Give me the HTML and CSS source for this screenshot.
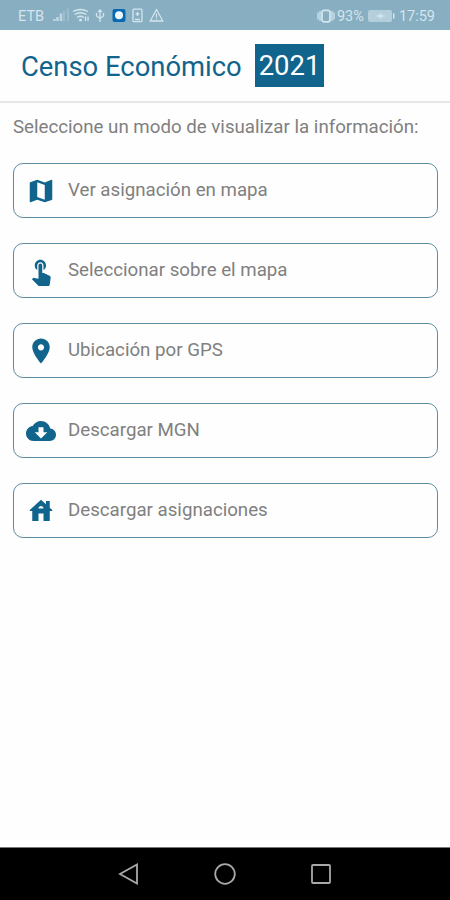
FILE: index.html
```html
<!DOCTYPE html>
<html lang="es">
<head>
    <meta charset="UTF-8">
    <meta name="viewport" content="width=device-width, initial-scale=1.0">
    <title>Censo Económico 2021</title>
    <link rel="stylesheet" href="styles.css">
</head>
<body>
    <div class="status-bar">
        <span class="carrier">ETB</span>
        <svg class="status-icons" width="114" height="18" viewBox="0 0 114 18">
            <!-- signal -->
            <path class="soft" d="M3.500 14v-2M6.500 14v-4M10 14V6.500"/>
            <path class="faint" d="M13 14V4M17 14V1.500"/>
            <!-- wifi -->
            <path class="line" d="M22 4.500q7.500-4 15 0M23.500 7.500q6-3.500 12 0M26 10.500q3.500-2.500 7 0"/>
            <circle class="fill" cx="29.500" cy="13" r="1.500"/>
            <path class="line" d="M34.500 9.500v4.500M37 9.500v4.500"/>
            <!-- usb -->
            <path class="line" d="M49 15V3M47 5l2-2 2 2M45.500 6v3l3.500 2.500L52.500 9V6"/>
            <!-- app -->
            <rect class="app-badge" x="61.500" y="2" width="13" height="13" rx="2"/>
            <circle class="app-dot" cx="68" cy="8.300" r="4"/>
            <!-- battery saver -->
            <rect class="line" x="82" y="2.200" width="9" height="12.500" rx="1"/>
            <path class="line" d="M86.500 5v4M84.700 7h3.600M84 12.500h5"/>
            <!-- warning -->
            <path class="line" d="M105.500 2.500l-6.300 11.500h12.600zM105.500 6.500v4M105.500 11.500v1"/>
        </svg>
        <svg class="vibrate" width="18" height="14" viewBox="0 0 18 14">
            <rect class="line bold" x="5" y="1.300" width="8" height="11.500" rx="2"/>
            <path class="line" d="M1 3.500v7M3 2v10M15 2v10M17 3.500v7"/>
        </svg>
        <span class="percent">93%</span>
        <svg class="battery" width="27" height="12" viewBox="0 0 27 12">
            <rect class="battery-body" x="0" y="0" width="24" height="12" rx="2"/>
            <path class="fill" d="M25 3.500h1.500v5H25zM7 6l4-1 1.500-2 1 2 4 1-4 1-1 2-1.500-2z"/>
        </svg>
        <span class="clock">17:59</span>
    </div>

    <header class="header">
        <h1>Censo Económico</h1>
        <span class="year">2021</span>
    </header>

    <main class="content">
        <p class="intro">Seleccione un modo de visualizar la información:</p>

        <button class="option">
            <svg class="option-icon" viewBox="0 0 24 24"><path d="M20.500 3l-.16.030L15 5.100 9 3 3.360 4.900c-.21.070-.36.250-.36.480V20.500c0 .28.220.5.500.5l.16-.03L9 18.900l6 2.100 5.640-1.900c.21-.07.360-.25.360-.48V3.500c0-.28-.22-.5-.5-.5zM15 19l-6-2.110V5l6 2.110V19z"/></svg>
            <span>Ver asignación en mapa</span>
        </button>

        <button class="option">
            <svg class="option-icon" viewBox="0 0 24 24"><path d="M9 11.240V7.500C9 6.120 10.120 5 11.500 5S14 6.120 14 7.500v3.740c1.210-.81 2-2.180 2-3.740C16 5.010 13.990 3 11.500 3S7 5.010 7 7.500c0 1.560.79 2.930 2 3.740zm9.840 4.630l-4.540-2.260c-.17-.07-.35-.11-.54-.11H13v-6c0-.83-.67-1.500-1.500-1.500S10 6.670 10 7.500v10.740l-3.430-.72c-.08-.01-.15-.03-.24-.03-.31 0-.59.130-.79.330l-.79.800 4.940 4.940c.27.270.65.440 1.060.440h6.790c.75 0 1.330-.55 1.440-1.280l.75-5.270c.01-.07.020-.14.020-.2 0-.62-.38-1.160-.91-1.380z"/></svg>
            <span>Seleccionar sobre el mapa</span>
        </button>

        <button class="option">
            <svg class="option-icon" viewBox="0 0 24 24"><path d="M12 2C8.130 2 5 5.130 5 9c0 5.250 7 13 7 13s7-7.750 7-13c0-3.870-3.130-7-7-7zm0 9.500c-1.380 0-2.500-1.120-2.500-2.500s1.120-2.500 2.500-2.500 2.500 1.120 2.500 2.500-1.120 2.500-2.500 2.500z"/></svg>
            <span>Ubicación por GPS</span>
        </button>

        <button class="option">
            <svg class="option-icon" viewBox="0 0 24 24"><path d="M19.350 10.040C18.670 6.590 15.640 4 12 4 9.110 4 6.600 5.640 5.350 8.040 2.340 8.360 0 10.910 0 14c0 3.310 2.690 6 6 6h13c2.760 0 5-2.240 5-5 0-2.640-2.050-4.780-4.650-4.960zM17 13l-5 5-5-5h3V9h4v4h3z"/></svg>
            <span>Descargar MGN</span>
        </button>

        <button class="option">
            <svg class="option-icon" viewBox="0 0 24 24"><path d="M19 9.300V4h-3v2.600L12 3 3 11.200V12h2v8h5v-6h4v6h5v-8h2v-.8L19 9.300zM10 10c0-1.100.9-2 2-2s2 .9 2 2h-4z"/></svg>
            <span>Descargar asignaciones</span>
        </button>
    </main>

    <nav class="nav-bar">
        <svg width="22" height="22" viewBox="0 0 22 22"><path d="M19 1.500v19L2 11z"/></svg>
        <svg width="22" height="22" viewBox="0 0 22 22"><circle cx="11" cy="11" r="9.800"/></svg>
        <svg width="22" height="22" viewBox="0 0 22 22"><rect x="2" y="2" width="18" height="18" rx="1"/></svg>
    </nav>
</body>
</html>
```
FILE: styles.css
```css
body {
    font-family: Roboto, 'Noto Sans', sans-serif;
    background-color: #fefefe;
    display: flex;
    flex-direction: column;
    height: 900px;
    margin: 0;
    overflow: hidden;
}

.status-bar {
    background-color: #88aec1;
    color: #d3e5ee;
    display: flex;
    align-items: center;
    height: 30px;
    padding: 2px 15px 0 18px;
    box-sizing: border-box;
    font-size: 14.5px;
    white-space: nowrap;
}

.carrier {
    width: 33px;
    font-size: 14.5px;
}

.status-icons {
    margin-right: auto;
}

.line, .soft, .faint {
    fill: none;
    stroke: #d3e5ee;
    stroke-width: 1.3;
}

.bold {
    stroke-width: 1.8;
}

.soft {
    stroke-width: 2.5;
    opacity: 0.75;
}

.faint {
    opacity: 0.4;
}

.fill {
    fill: #d3e5ee;
}

.app-badge {
    fill: #0869b2;
}

.app-dot {
    fill: #eefaff;
}

.battery-body {
    fill: #b5cedb;
}

.percent {
    margin: 0 4px 0 2px;
}

.clock {
    margin-left: 4px;
}

.header {
    display: flex;
    align-items: center;
    height: 73px;
    padding: 0 21px;
    box-sizing: border-box;
    border-bottom: 2px solid #e7e7e7;
    color: #11648c;
}

h1 {
    width: 234px;
    margin: 0;
    padding-top: 2px;
    font-size: 27.4px;
    font-weight: 400;
    white-space: nowrap;
}

.year {
    background-color: #11648c;
    color: #fff;
    width: 69px;
    height: 43px;
    line-height: 45px;
    font-size: 27.4px;
    text-align: center;
}

.content {
    flex: 1;
    display: flex;
    flex-direction: column;
    gap: 25px;
    padding: 13px 12px 0 13px;
}

.intro {
    margin: 0;
    height: 22px;
    line-height: 22px;
    font-size: 18.7px;
    color: #808080;
    white-space: nowrap;
}

.option {
    display: flex;
    align-items: center;
    gap: 12.5px;
    width: 100%;
    height: 55px;
    padding: 0 0 0 11.5px;
    box-sizing: border-box;
    background-color: #fefefe;
    border: 1.5px solid #5d8ca2;
    border-radius: 10px;
    color: #808080;
    font-family: inherit;
    font-size: 18.7px;
    text-align: left;
}

.option span {
    padding-bottom: 2px;
}

.option-icon {
    width: 30px;
    height: 30px;
    fill: #11648c;
}

.nav-bar {
    display: flex;
    justify-content: center;
    align-items: center;
    gap: 74px;
    height: 53px;
    background-color: #000;
    border-top: 1px solid #777;
    box-sizing: border-box;
}

.nav-bar svg {
    fill: none;
    stroke: #a8a8a8;
    stroke-width: 1.8;
}
```
